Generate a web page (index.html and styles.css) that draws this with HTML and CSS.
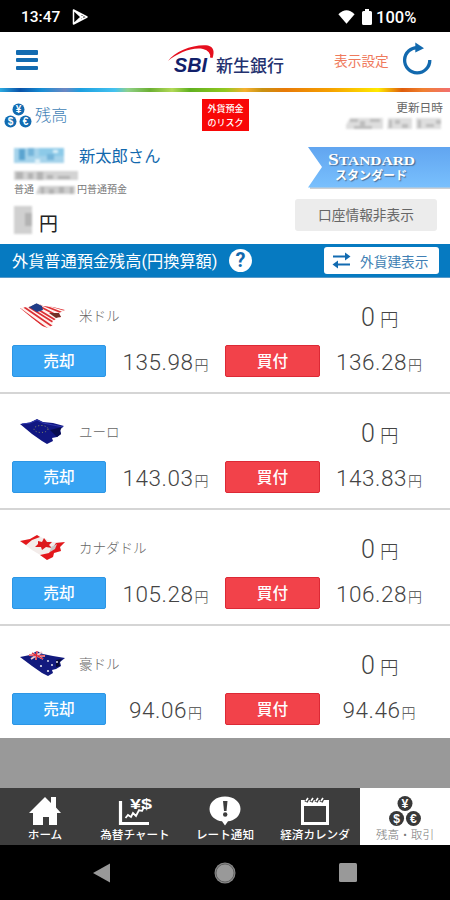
FILE: index.html
```html
<!DOCTYPE html>
<html lang="ja">
<head>
<meta charset="utf-8">
<title>残高</title>
<link rel="stylesheet" href="styles.css">
</head>
<body>
<div class="status">
  <span class="clock">13:47</span>
  <svg class="play" width="17" height="18" viewBox="0 0 17 18" fill="none" stroke="#fff" stroke-width="1.5" stroke-linejoin="round"><path d="M1.500 2 15 9 1.500 16ZM2 2.500 9 9 2 15.500M5 4 12 11M5 14 12 7"/></svg>
  <svg class="wifi" width="17" height="14" viewBox="0 0 17 14"><path d="M.4 4.200Q8.500-3.600 16.600 4.200L8.500 13.800Z" fill="#fff"/></svg>
  <svg class="battery" width="10" height="16" viewBox="0 0 10 16"><path d="M3 0h4v2h1.500q1.500 0 1.500 1.500v11q0 1.500-1.500 1.500h-7q-1.500 0-1.500-1.500v-11q0-1.500 1.500-1.500h1.500z" fill="#fff"/></svg>
  <span class="percent">100%</span>
</div>

<header class="header">
  <div class="menu"><i></i><i></i><i></i></div>
  <div class="logo">
    <svg width="48" height="32" viewBox="0 0 48 32"><path d="M0 17C7 7 26 0 40 1.500Q48 3.500 44.500 14L42 13.500Q43 7 35 5C24 3 10 9 0 17Z" fill="#e60f1e"/><text x="6" y="28" textLength="33" lengthAdjust="spacingAndGlyphs" class="sbi">SBI</text></svg>
    <span class="bank">新生銀行</span>
  </div>
  <span class="settings">表示設定</span>
  <svg class="reload" width="30" height="34" viewBox="0 0 30 34"><path d="M16.200 5.700A12.600 12.600 0 1 0 27.800 18" fill="none" stroke="#1269ae" stroke-width="3.300"/><path d="M13.300.5 22 6.200 13.300 10.500Z" fill="#1269ae"/></svg>
</header>
<div class="rainbow"></div>

<section class="summary">
  <div class="title-row">
    <svg class="coins" width="27" height="25" viewBox="0 0 27 25"><g fill="#126bb1"><circle cx="13.500" cy="5.500" r="6"/><circle cx="5.500" cy="17.500" r="6"/><circle cx="20.500" cy="17.500" r="6"/></g><g class="coin-text"><text x="13.500" y="9">¥</text><text x="5.500" y="21">$</text><text x="20.500" y="21">€</text></g></svg>
    <h1 class="title">残高</h1>
    <div class="risk">外貨預金<br>のリスク</div>
    <div class="updated">更新日時
      <svg class="mosaic" width="97" height="14" viewBox="0 0 97 14"><path d="M4 1h33v11H0V8zM42 1h24v11H41zM70 1h25v11H70z" fill="#dedede"/><path d="M4 2h8v3H4zM14 4h5v7h-5zM24 2h10v3H24zM8 9h18v3H8zM43 3h3v8h-3zM49 3h5v4h-5zM56 7h6v4h-6zM72 3h3v8h-3zM80 7h8v3h-8zM90 3h5v4h-5z" fill="#bdbdbd"/></svg>
    </div>
  </div>
  <div class="account">
    <div class="holder">
      <div class="name"><svg class="mosaic" width="50" height="17" viewBox="0 0 50 17"><path d="M0 1h50v15H0z" fill="#a5d3eb"/><path d="M25 1h25v8H25z" fill="#8dcae8"/><path d="M5 2h6v11H5z" fill="#5ba4d0"/><path d="M14 1h6v8h-6zM33 7h7v6h-7z" fill="#75b5da"/><path d="M39 3h5v3h-5zM21 12h5v5h-5z" fill="#dff1f9"/></svg><span>新太郎さん</span></div>
      <svg class="mosaic branch" width="64" height="10" viewBox="0 0 64 10"><path d="M0 0h64v9H0z" fill="#d3d3d3"/><path d="M2 1h7v7H2zM14 2h5v6h-5zM23 1h6v8h-6zM33 4h6v4h-6zM44 5h12v3H44z" fill="#b3b3b3"/></svg>
      <div class="kind"><span>普通</span><svg class="mosaic" width="39" height="9" viewBox="0 0 39 9"><path d="M3 0h36v8H0z" fill="#cdcdcd"/><path d="M5 1h3v7H5zM13 3h5v5h-5zM23 1h5v6h-5zM34 1h3v7h-3z" fill="#b2b2b2"/></svg><span>円普通預金</span></div>
      <div class="total"><svg class="mosaic" width="18" height="28" viewBox="0 0 18 28"><path d="M0 0h18v28H0z" fill="#d0d0d0"/><path d="M11 7h7v13h-7z" fill="#b3b3b3"/></svg><span>円</span></div>
    </div>
    <div class="side">
      <svg class="ribbon" width="142" height="43" viewBox="0 0 142 43"><defs><linearGradient id="rb" x2="0" y2="1"><stop stop-color="#61a5f0"/><stop offset="1" stop-color="#79c0fd"/></linearGradient></defs><path d="M2 41H142" stroke="#9aa0a6"/><path d="M0 0H142V40.500H0L14 20Z" fill="url(#rb)"/><g class="ribbon-text"><text x="20" y="17.500" textLength="87" lengthAdjust="spacingAndGlyphs" class="std"><tspan class="big">S</tspan>TANDARD</text><text x="27" y="33" textLength="72" lengthAdjust="spacingAndGlyphs" class="std-ja">スタンダード</text></g></svg>
      <div class="toggle">口座情報非表示</div>
    </div>
  </div>
</section>

<div class="bar">
  <h2 class="bar-title">外貨普通預金残高(円換算額)</h2>
  <span class="help">?</span>
  <div class="switch"><svg width="19" height="17" viewBox="0 0 19 17"><path d="M1 4.500H14M5 12.500H18" stroke="#126bb1" stroke-width="2.200"/><path d="M13 .5 18.500 4.500 13 8.500ZM6 8.500.5 12.500 6 16.500Z" fill="#126bb1"/></svg>外貨建表示</div>
</div>

<main class="list">
  <article class="fx">
    <svg class="flag" width="46" height="26" viewBox="0 0 46 26"><defs><clipPath id="c"><path d="M0 5 10 3.500 17 0 23 3 33 4 45 7 39 10 41 14 37 15 32 19 33 22 28 25 22 23 12 15Z"/></clipPath></defs><g clip-path="url(#c)"><path d="M0 0H46V26H0Z" fill="#fff3ef"/><path d="M-1 5 29 27M4 4 33 24M9 4 36 21M14 4 37 18M17 2 42 15M20 1 45 11M25 1 48 8" stroke="#dc3035" stroke-width="1.700"/><path d="M9 4 16 0 22 3 23 7 17 9 12 6Z" fill="#203d87"/><path d="M29 10 41 10 41 14 36 15Z" fill="#743027"/></g></svg>
    <span class="currency">米ドル</span><div class="balance">0<small>円</small></div>
    <span class="btn sell">売却</span><div class="rate">135.98<small>円</small></div><span class="btn buy">買付</span><div class="rate">136.28<small>円</small></div>
  </article>
  <article class="fx">
    <svg class="flag" width="46" height="26" viewBox="0 0 46 26"><path d="M0 5 10 3.500 17 0 23 3 33 4 44 7 40 10 41 15 37 18 32 19 33 22 27 25 22 22 12 15Z" fill="#111782"/><path d="M30 11 42 8 40 12 41 15 37 18Z" fill="#080d50"/><ellipse cx="21" cy="10" rx="7" ry="3.500" fill="none" stroke="#8e9562" stroke-width="1" stroke-dasharray="1 2.200"/><path d="M2 5 10 4 17 1 23 4 43 8" fill="none" stroke="#3038ad"/></svg>
    <span class="currency">ユーロ</span><div class="balance">0<small>円</small></div>
    <span class="btn sell">売却</span><div class="rate">143.03<small>円</small></div><span class="btn buy">買付</span><div class="rate">143.83<small>円</small></div>
  </article>
  <article class="fx">
    <svg class="flag" width="46" height="26" viewBox="0 0 46 26"><path d="M0 6 10 4 17 0 23 3 33 7 45 7 40 12 41 16 34 18 33 22 27 25 22 21 12 15Z" fill="#f3ecea"/><path d="M0 6 10 4 17 0 20 2 12 5 6 10ZM36 8 45 7 40 12 41 16 34 18 33 22 27 25 20 20 29 18Z" fill="#e3171b"/><path d="M18 6 22 7 24 3 27 7 32 7 29 10 32 13 26 12 22 15 21 12 15 12 18 9Z" fill="#dc171b"/><path d="M31 12 37 9 35 14 30 17Z" fill="#c9c7c6"/></svg>
    <span class="currency">カナダドル</span><div class="balance">0<small>円</small></div>
    <span class="btn sell">売却</span><div class="rate">105.28<small>円</small></div><span class="btn buy">買付</span><div class="rate">106.28<small>円</small></div>
  </article>
  <article class="fx">
    <svg class="flag" width="46" height="26" viewBox="0 0 46 26"><path d="M0 6 10 4 17 0 23 3 33 5 45 7 40 11 41 15 36 18 32 19 33 22 28 25 22 22 12 15Z" fill="#121a7e"/><path d="M9 4 25 5M17 0 16 9M12 2 23 8M22 1 11 8" stroke="#f2cccf" stroke-width="1.800"/><path d="M9 4 25 5M17 0 16 9M12 2 23 8" stroke="#df2536" stroke-width="1.200"/><path d="M36 9 42 8 39 12 40 15 36 16Z" fill="#070b34"/><g fill="#e4e5ef"><circle cx="21" cy="15" r="1.100"/><circle cx="28" cy="10" r=".9"/><circle cx="32" cy="14" r="1"/><circle cx="28" cy="20" r="1.100"/><circle cx="37" cy="11" r="1"/></g></svg>
    <span class="currency">豪ドル</span><div class="balance">0<small>円</small></div>
    <span class="btn sell">売却</span><div class="rate">94.06<small>円</small></div><span class="btn buy">買付</span><div class="rate">94.46<small>円</small></div>
  </article>
</main>
<div class="filler"></div>

<nav class="tabs">
  <div class="tab"><svg width="32" height="30" viewBox="0 0 32 30"><path d="M16 1 22 7V1h5v10.500L32 17h-4v12h-8v-8h-6v8H4V17H0Z" fill="#fff"/></svg><span>ホーム</span></div>
  <div class="tab"><svg width="32" height="30" viewBox="0 0 32 30"><path d="M1.500 5V27.500H30" fill="none" stroke="#fff" stroke-width="3.200"/><path d="M6.500 22 9 19 12 21 14 17 17 20 20 14 23 15 25 11" fill="none" stroke="#fff" stroke-width="1.800"/><text x="11" y="12.500" textLength="22" lengthAdjust="spacingAndGlyphs" class="yen-dollar">¥$</text></svg><span>為替チャート</span></div>
  <div class="tab"><svg width="32" height="30" viewBox="0 0 32 30"><path d="M16 .500C25 .500 31.500 6 31.500 13S25 25 19 25.300L16 29.500 13 25.300C7 25 .5 20 .5 13S7 .500 16 .500Z" fill="#fff"/><path d="M14 5h4.500l-1 10h-2.500z" fill="#3d3d3d"/><circle cx="16.200" cy="18.500" r="2.200" fill="#3d3d3d"/></svg><span>レート通知</span></div>
  <div class="tab"><svg width="28" height="30" viewBox="0 0 28 30"><path d="M0 4h28v25H0ZM3 10v16h22V10Z" fill="#fff" fill-rule="evenodd"/><path d="M5 6 7 2M10 6 12 2M15 6 17 2M20 6 22 2" stroke="#3d3d3d" stroke-width="3.500"/><path d="M5 5 7 2M10 5 12 2M15 5 17 2M20 5 22 2" stroke="#fff" stroke-width="1.600"/></svg><span>経済カレンダ</span></div>
  <div class="tab active"><svg width="34" height="32" viewBox="0 0 34 32"><g fill="#383838"><circle cx="17" cy="8" r="8"/><circle cx="8" cy="24" r="8"/><circle cx="26" cy="24" r="8"/></g><g class="coin-text large"><text x="17" y="12.500">¥</text><text x="8" y="28.500">$</text><text x="26" y="28.500">€</text></g></svg><span>残高・取引</span></div>
</nav>
<div class="system">
  <svg width="18" height="20" viewBox="0 0 18 20"><path d="M0 10 17 .5V19.500Z" fill="#999"/></svg>
  <svg width="22" height="22" viewBox="0 0 22 22"><circle cx="11" cy="11" r="10.500" fill="#888"/><circle cx="11" cy="11" r="9" fill="#999" stroke="#555" stroke-width=".8"/></svg>
  <svg width="18" height="19" viewBox="0 0 18 19"><rect width="18" height="19" rx="1.500" fill="#999"/></svg>
</div>
</body>
</html>
```

FILE: styles.css
```css
* { box-sizing: border-box; }
body { margin: 0; width: 450px; height: 900px; overflow: hidden; background: #fff; font-family: Roboto, "Noto Sans CJK JP", sans-serif; color: #444; display: flex; flex-direction: column; }
body > * { flex: none; }
svg { display: block; flex: none; overflow: visible; }
h1, h2 { margin: 0; font-weight: 400; }
.mosaic { filter: blur(.8px); }

.status { height: 32px; background: #000; color: #fff; display: flex; align-items: center; padding: 2px 32px 0 21px; font-size: 15.5px; font-weight: 500; }
.play { margin-left: 12px; }
.wifi { margin-left: auto; }
.battery { margin: 0 4px 0 7px; }
.percent { font-size: 16.5px; width: 42px; }

.header { height: 56px; display: flex; align-items: center; padding-left: 16px; }
.menu { width: 22px; height: 20px; display: flex; flex-direction: column; justify-content: space-between; }
.menu i { height: 4.5px; border-radius: 1px; background: #126bb1; }
.logo { margin-left: 130px; display: flex; align-items: center; width: 120px; }
.sbi { font: italic bold 21px "Liberation Sans", sans-serif; fill: #11206a; }
.bank { font: 500 17px/24px "Noto Sans CJK JP", sans-serif; color: #24326f; white-space: nowrap; margin-top: 9px; }
.settings { margin-left: 46px; font-size: 13.7px; color: #ef7a5c; white-space: nowrap; width: 55px; }
.reload { margin-left: 13px; margin-top: -2px; }
.rainbow { height: 4px; background: linear-gradient(90deg, #2cabe1 0, #0a52a8 20px, #168ed5 42px, #6c86c2 65px, #1c9fe0 80px, #45c2ef 115px, #8fd089 128px, #6cb033 150px, #b2d957 172px, #60b020 190px, #91c820 225px, #f5b030 245px, #c89212 262px, #e87a08 285px, #f5a000 330px, #ffea00 378px, #df5d0c 402px, #f08030 423px, #f27070 450px); }

.summary { height: 152px; }
.title-row { height: 46px; display: flex; align-items: flex-start; padding: 7px 7px 0 5px; }
.coins { margin-top: 5px; }
.coin-text { font: bold 10px "Liberation Sans", sans-serif; fill: #fff; text-anchor: middle; }
.coin-text.large { font-size: 13px; }
.title { font-size: 16.3px; line-height: 24px; margin: 5px 0 0 3px; width: 40px; color: #3f7fb6; font-weight: 300; }
.risk { margin-left: 127px; width: 47px; height: 32px; padding-top: 3px; background: #f80707; color: #fff; font-size: 9px; line-height: 14px; font-weight: 500; text-align: center; }
.updated { margin-left: auto; font-size: 11.7px; line-height: 18px; color: #666; display: flex; flex-direction: column; align-items: flex-end; }
.account { display: flex; justify-content: space-between; padding-left: 14px; }
.name { display: flex; align-items: center; gap: 15px; height: 24px; margin-top: 5px; font-size: 16.3px; color: #1269ae; white-space: nowrap; }
.branch { margin-top: 4px; }
.kind { display: flex; align-items: center; gap: 2px; font-size: 10px; line-height: 14px; margin-top: 2px; color: #777; }
.total { display: flex; gap: 7px; margin-top: 9px; font-size: 19px; line-height: 38px; height: 28px; color: #222; }
.side { display: flex; flex-direction: column; align-items: flex-end; padding-top: 9px; }
.ribbon-text { fill: #fff; text-shadow: 1px 1px 1px #4a6e96; }
.std { font: bold 13.5px "Liberation Serif", serif; }
.big { font-size: 17px; }
.std-ja { font: bold 12px "Noto Sans CJK JP", sans-serif; }
.toggle { width: 142px; height: 32px; margin: 9px 13px 0 0; border-radius: 3px; background: #ececec; font-size: 13.7px; line-height: 33px; text-align: center; color: #666; }

.bar { height: 34px; background: #067ac1; border-bottom: 1px solid #5799c8; color: #fff; display: flex; align-items: center; padding: 0 11px 0 12px; }
.bar-title { font-size: 16.2px; font-weight: 400; white-space: nowrap; width: 206px; line-height: 34px; padding-top: 2px; }
.help { width: 23px; height: 23px; margin-left: 11px; border-radius: 50%; background: #fff; color: #1269ae; font-size: 20px; font-weight: 700; line-height: 23px; text-align: center; }
.switch { margin-left: auto; width: 115px; height: 27px; border-radius: 3px; background: #fff; color: #407fb4; display: flex; align-items: center; gap: 9px; padding-left: 8px; font-size: 13.7px; white-space: nowrap; }

.list { height: 460px; }
.fx { height: 116px; border-bottom: 2px solid #d5d5d5; padding: 0 0 0 12px; display: grid; grid-template-columns: 94px 119px 95px 118px; grid-template-rows: 67px 32px; align-items: start; background: #fff; }
.fx:last-child { height: 112px; border-bottom: 0; }
.flag { grid-column: 1; grid-row: 1; margin: 25px 0 0 8px; }
.currency { grid-column: 1 / 4; grid-row: 1; margin: 27px 0 0 67px; font-size: 13.5px; line-height: 22px; color: #666; font-weight: 300; }
.balance { grid-column: 4; grid-row: 1; margin: 25px 0 0 41px; font-size: 25px; line-height: 30px; white-space: nowrap; font-weight: 300; }
.balance small { font-size: 18.5px; margin-left: 5px; }
.btn { height: 32px; border-radius: 2px; color: #fff; font-size: 15.7px; line-height: 31px; font-weight: 500; text-align: center; }
.sell { background: #38a4f3; border: 1px solid #2c96e5; }
.buy { background: #f2424a; border: 1px solid #dc2935; }
.rate { font-size: 22.5px; line-height: 34px; letter-spacing: .5px; text-align: center; white-space: nowrap; font-weight: 300; }
.rate small { font-size: 14px; letter-spacing: 0; margin-left: 1px; }
.filler { height: 50px; background: #999; }

.tabs { height: 57px; background: #3d3d3d; display: grid; grid-template-columns: repeat(5, 90px); color: #fff; }
.tab { display: flex; flex-direction: column; align-items: center; padding-top: 8px; font-size: 11.6px; line-height: 16px; font-weight: 500; white-space: nowrap; }
.tab svg { height: 30px; }
.tab span { margin-top: 1px; }
.active { background: #fff; color: #777; font-weight: 300; }
.yen-dollar { font: bold 14px "Liberation Sans", sans-serif; fill: #fff; }
.system { height: 55px; background: #000; display: flex; justify-content: space-between; align-items: center; padding: 0 93px; }
```
